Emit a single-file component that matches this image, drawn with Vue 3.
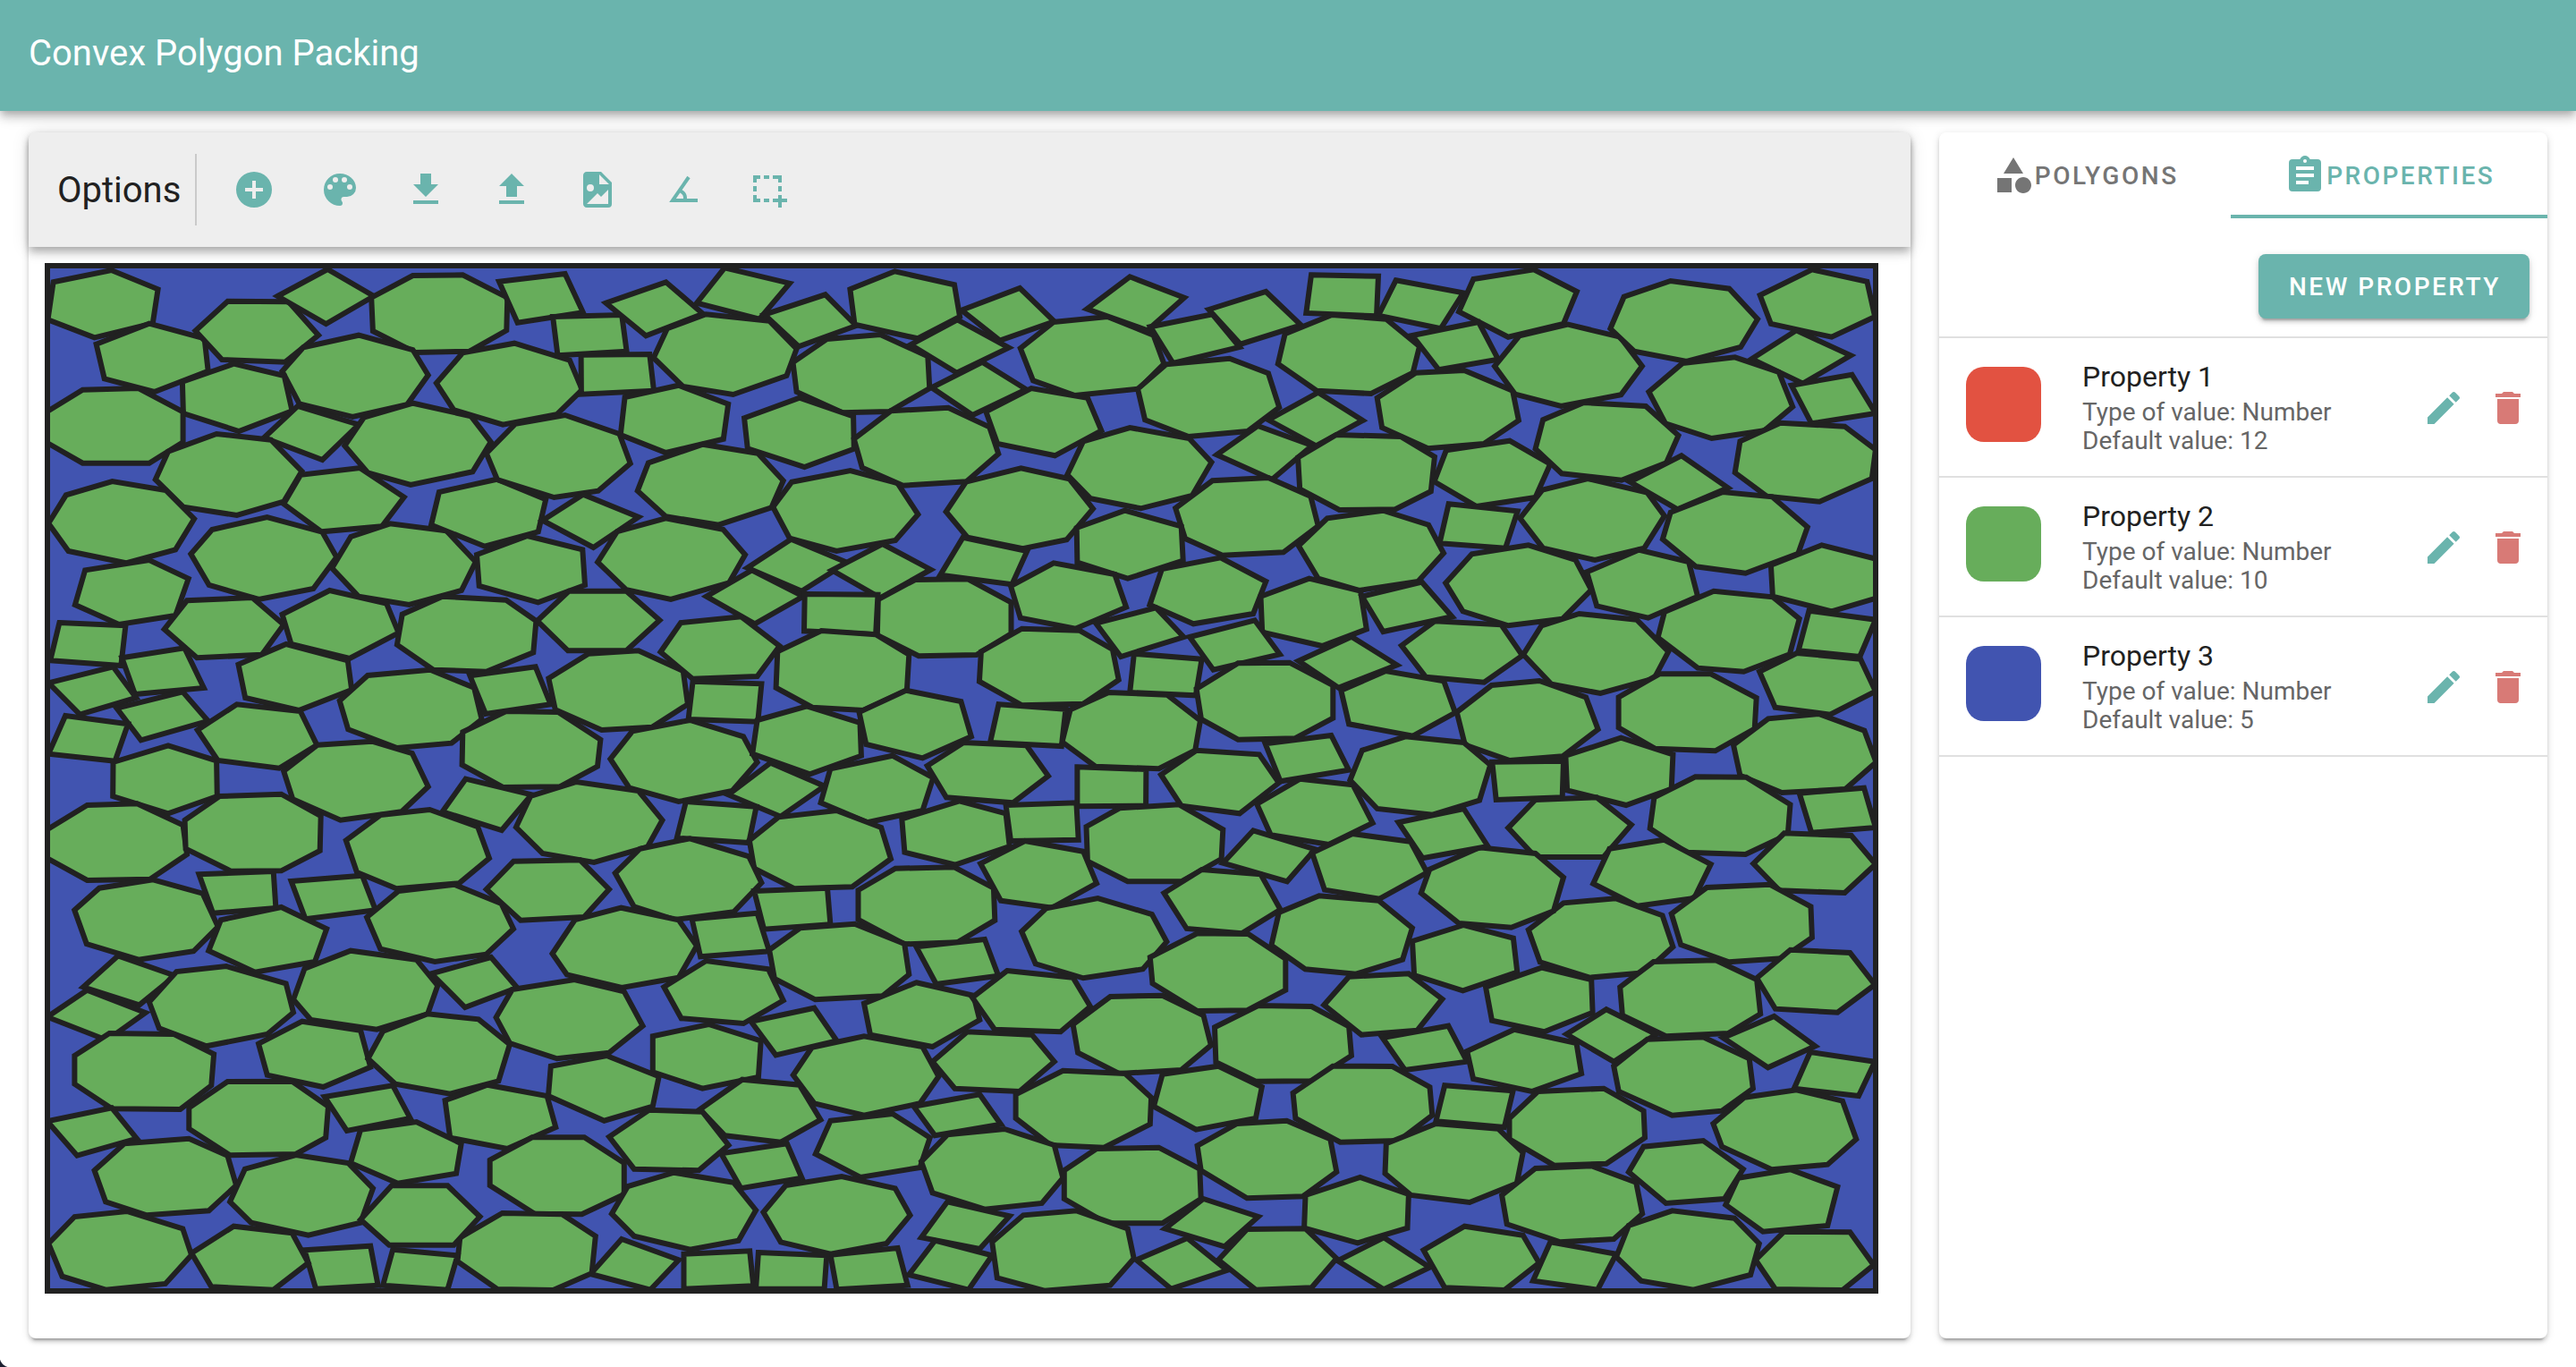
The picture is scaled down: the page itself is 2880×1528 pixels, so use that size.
<script setup>
import { ref } from 'vue'

const icons = {
  add: 'M17,13H13V17H11V13H7V11H11V7H13V11H17M12,2A10,10 0 0,0 2,12A10,10 0 0,0 12,22A10,10 0 0,0 22,12A10,10 0 0,0 12,2Z',
  palette: 'M17.5,12A1.5,1.5 0 0,1 16,10.5A1.5,1.5 0 0,1 17.5,9A1.5,1.5 0 0,1 19,10.5A1.5,1.5 0 0,1 17.5,12M14.5,8A1.5,1.5 0 0,1 13,6.5A1.5,1.5 0 0,1 14.5,5A1.5,1.5 0 0,1 16,6.5A1.5,1.5 0 0,1 14.5,8M9.5,8A1.5,1.5 0 0,1 8,6.5A1.5,1.5 0 0,1 9.5,5A1.5,1.5 0 0,1 11,6.5A1.5,1.5 0 0,1 9.5,8M6.5,12A1.5,1.5 0 0,1 5,10.5A1.5,1.5 0 0,1 6.5,9A1.5,1.5 0 0,1 8,10.5A1.5,1.5 0 0,1 6.5,12M12,3A9,9 0 0,0 3,12A9,9 0 0,0 12,21A1.5,1.5 0 0,0 13.5,19.5C13.5,19.11 13.35,18.76 13.11,18.5C12.88,18.23 12.73,17.88 12.73,17.5A1.5,1.5 0 0,1 14.23,16H16A5,5 0 0,0 21,11C21,6.58 16.97,3 12,3Z',
  download: 'M5,20H19V18H5M19,9H15V3H9V9H5L12,16L19,9Z',
  upload: 'M9,16V10H5L12,3L19,10H15V16H9M5,20V18H19V20H5Z',
  image: 'M13,9H18.5L13,3.5V9M6,2H14L20,8V20A2,2 0 0,1 18,22H6C4.89,22 4,21.1 4,20V4C4,2.89 4.89,2 6,2M6,20H15L18,20V12L14,16L12,14L6,20M8,9A2,2 0 0,0 6,11A2,2 0 0,0 8,13A2,2 0 0,0 10,11A2,2 0 0,0 8,9Z',
  angle: 'M20,19H4.09L14.18,4.43L15.82,5.57L11.28,12.13C12.89,12.96 14,14.62 14,16.54C14,16.7 14,16.85 13.97,17H20V19M7.91,17H11.96C12,16.85 12,16.7 12,16.54C12,15.28 11.24,14.22 10.14,13.78L7.91,17Z',
  select: 'M3,4H7V6H5V8H3V4M9,4H12V6H9V4M14,4H19V8H17V6H14V4M3,10H5V13H3V10M17,10H19V13H17V10M3,15H5V17H7V19H3V15M9,17H12V19H9V17M17,15H19V17H22V19H19V22H17V19H14V17H17V15Z',
  shape: 'M11,13.5V21.5H3V13.5H11M12,2L17.5,11H6.5L12,2M17.5,13C20,13 22,15 22,17.5C22,20 20,22 17.5,22C15,22 13,20 13,17.5C13,15 15,13 17.5,13Z',
  clipboard: 'M17,9H7V7H17M17,13H7V11H17M14,17H7V15H14M12,3A1,1 0 0,1 13,4A1,1 0 0,1 12,5A1,1 0 0,1 11,4A1,1 0 0,1 12,3M19,3H14.82C14.4,1.84 13.3,1 12,1C10.7,1 9.6,1.84 9.18,3H5A2,2 0 0,0 3,5V19A2,2 0 0,0 5,21H19A2,2 0 0,0 21,19V5A2,2 0 0,0 19,3Z',
  pencil: 'M20.71,7.04C21.1,6.65 21.1,6 20.71,5.63L18.37,3.29C18,2.9 17.35,2.9 16.96,3.29L15.12,5.12L18.87,8.87M3,17.25V21H6.75L17.81,9.93L14.06,6.18L3,17.25Z',
  trash: 'M19,4H15.5L14.5,3H9.5L8.5,4H5V6H19M6,19A2,2 0 0,0 8,21H16A2,2 0 0,0 18,19V7H6V19Z',
}

const tools = [
  { icon: 'add', label: 'Add' },
  { icon: 'palette', label: 'Colors' },
  { icon: 'download', label: 'Download' },
  { icon: 'upload', label: 'Upload' },
  { icon: 'image', label: 'Export image' },
  { icon: 'angle', label: 'Angle' },
  { icon: 'select', label: 'Select area' },
]

const tabs = [
  { id: 'polygons', icon: 'shape', label: 'Polygons' },
  { id: 'properties', icon: 'clipboard', label: 'Properties' },
]
const activeTab = ref('properties')

const properties = [
  { name: 'Property 1', color: '#e25241', type: 'Number', value: 12 },
  { name: 'Property 2', color: '#67ad5b', type: 'Number', value: 10 },
  { name: 'Property 3', color: '#4154b0', type: 'Number', value: 5 },
]

// Packed polygons, stored per region of the container: one polygon per line,
// vertices in region units.
const regions = [
  { x: -10, y: -14, sx: 0.338, sy: 1 / 3, shapes: `
58,106 250,66 404,130 387,244 194,292 40,232
200,314 375,245 558,295 570,404 392,474 227,430
528,269 635,170 836,172 935,284 825,374 616,366
800,153 965,63 1118,153 960,246
1110,158 1247,84 1412,82 1560,158 1557,268 1435,338 1255,342 1115,270
815,405 885,325 1068,284 1247,333 1298,418 1228,517 1048,558 872,514
1325,445 1412,343 1583,311 1766,368 1807,467 1723,550 1545,584 1382,534
485,440 655,380 822,420 848,538 672,606 488,546
38,540 155,467 340,462 487,541 487,643 375,713 155,713 38,645
755,628 866,522 1068,584 948,702
1022,655 1085,560 1248,512 1440,556 1505,642 1445,742 1240,786 1098,745
396,768 438,674 598,615 778,635 880,740 820,842 665,888 488,860
820,850 876,752 1072,729 1218,827 1145,925 945,943
42,915 100,820 253,774 430,804 524,900 462,1003 298,1048 108,1008
513,1018 583,936 765,894 948,944 995,1028 918,1134 738,1170 573,1122
980,1065 1042,960 1172,916 1358,940 1455,1044 1408,1140 1235,1188 1068,1160
1308,920 1334,810 1525,767 1687,835 1662,943 1485,992
130,1188 163,1072 375,1038 505,1100 462,1224 275,1254` },
  { x: 510, y: -14, sx: 0.338, sy: 1 / 3, shapes: `
-48,680 48,581 212,552 392,615 428,714 322,806 176,828 -12,768
-80,1020 88,957 270,1003 278,1122 123,1180 -72,1125
-6,104 212,78 272,208 55,242
172,222 400,216 416,338 188,352
265,350 492,348 506,470 266,482
348,176 546,106 668,212 480,286
740,58 955,110 855,230 648,176
505,360 550,262 678,214 888,236 978,330 945,420 768,483 602,456
872,215 1073,148 1175,252 985,322
1155,130 1303,70 1500,115 1518,222 1378,295 1170,248
966,375 1078,297 1255,282 1412,355 1418,462 1285,540 1130,544 978,474
410,492 588,452 752,515 736,632 546,678 396,618
805,562 988,494 1166,556 1168,665 1004,726 816,664
452,806 488,712 668,650 850,680 934,772 895,862 720,920 545,892
900,860 962,776 1156,738 1312,780 1380,885 1305,972 1110,1008 955,965
1168,632 1290,538 1480,527 1616,592 1646,682 1540,775 1330,788 1195,728
138,905 272,818 455,894 306,996
320,1045 385,942 545,898 735,935 808,1020 755,1114 562,1170 415,1138
815,1064 960,968 1145,1046 995,1142
1095,1072 1262,984 1422,1070 1255,1165
680,1160 830,1072 1000,1160 840,1252
1355,316 1510,232 1680,326 1508,410
1425,460 1592,374 1738,466 1560,552
1248,1170 1370,1104 1545,1102 1688,1180 1688,1285 1573,1356 1382,1360 1245,1290` },
  { x: 1030, y: -14, sx: 0.338, sy: 1 / 3, shapes: `
-15,200 178,126 292,238 112,302
180,328 290,240 468,222 620,284 655,380 572,464 360,486 222,436
400,196 542,88 722,158 600,268
610,256 815,214 905,324 685,378
803,198 992,138 1108,250 908,314
1142,82 1364,86 1358,220 1125,210
1422,100 1645,142 1570,262 1364,218
1032,380 1055,280 1210,216 1390,230 1500,322 1478,410 1340,480 1160,470
66,540 216,462 402,494 448,604 294,688 104,648
568,464 662,382 872,362 1000,412 1036,526 932,606 736,624 592,568
335,752 388,640 542,594 738,630 812,710 748,822 578,865 412,832
1000,568 1165,476 1312,570 1158,655
830,685 965,588 1145,654 1012,768
1360,494 1488,410 1648,402 1808,470 1828,570 1713,648 1528,664 1376,594
1098,694 1225,618 1438,624 1550,692 1538,808 1420,868 1235,870 1104,800
-66,876 0,776 182,730 342,766 420,866 333,970 188,1000 5,962
-10,962 202,1008 152,1120 -85,1088
693,864 815,772 1000,762 1140,824 1165,924 1050,1012 848,1022 725,966
366,930 525,872 712,925 718,1040 535,1100 368,1046
1100,990 1195,898 1380,872 1530,920 1580,1015 1495,1110 1300,1140 1165,1100
148,1125 290,1048 492,1086 530,1196 362,1268 180,1232
608,1188 648,1068 842,1030 992,1110 950,1218 752,1252
975,1160 1135,1100 1305,1142 1325,1270 1178,1326 980,1280` },
  { x: 1550, y: -14, sx: 0.338, sy: 1 / 3, shapes: `
92,205 140,96 340,64 482,138 438,246 255,290
-62,285 157,240 222,365 25,400
210,388 292,286 452,248 625,290 698,388 628,484 430,522 278,482
593,262 638,155 792,102 986,128 1080,230 1024,324 845,372 672,338
1088,150 1260,64 1442,104 1468,222 1325,290 1124,246
1060,364 1208,268 1388,352 1230,446
1192,452 1392,416 1470,546 1258,580
720,474 832,378 1005,358 1150,408 1196,524 1102,604 928,630 775,580
345,665 370,568 505,510 710,522 818,620 778,712 630,770 432,748
1005,745 1022,640 1155,578 1368,590 1470,668 1458,765 1285,842 1110,824
10,775 50,670 260,638 394,716 345,828 150,858
658,776 828,688 982,796 815,868
58,850 286,874 246,998 28,982
294,898 368,803 518,765 715,812 772,890 705,998 542,1038 370,998
766,968 792,878 965,810 1128,826 1245,928 1214,1016 1040,1082 876,1060
48,1115 135,1018 322,988 478,1038 530,1138 435,1235 255,1258 105,1210
515,1078 686,1004 852,1044 882,1160 718,1232 548,1192
1124,1055 1292,988 1475,1035 1475,1165 1325,1210 1130,1160` },
  { x: -10, y: 376, sx: 0.338, sy: 1 / 3, shapes: `
425,100 500,4 716,-6 820,85 748,185 533,196
815,50 972,-30 1160,14 1200,112 1038,198 845,150
1195,152 1212,50 1345,-10 1556,2 1655,72 1646,178 1490,242 1315,236
78,78 297,88 282,222 48,205
285,196 492,163 556,297 328,318
42,280 256,226 332,330 146,386
268,365 486,310 570,408 348,472
98,390 305,418 262,542 42,518
256,546 438,490 598,541 600,660 438,718 255,660
670,218 828,150 1032,205 1045,303 870,372 693,330
535,438 665,352 875,375 930,488 805,566 602,540
1005,340 1098,255 1305,236 1450,296 1475,402 1375,482 1195,498 1033,436
820,576 932,488 1112,476 1245,516 1298,628 1210,712 1008,740 850,670
38,772 170,690 335,685 487,757 500,855 378,938 170,942 38,868
493,740 608,660 812,653 943,726 940,843 812,910 645,911 496,836
1026,808 1140,723 1303,705 1462,763 1500,868 1400,952 1193,970 1062,915
1436,256 1653,226 1703,352 1488,384
1412,445 1556,375 1728,378 1868,470 1858,560 1733,628 1545,630 1410,555
1422,602 1640,655 1541,774 1345,712
540,922 786,912 794,1035 586,1052
845,945 1080,926 1124,1042 892,1072
128,1042 210,968 388,940 552,986 603,1098 522,1180 340,1208 168,1155
572,1178 612,1075 812,1032 962,1105 923,1215 725,1250
1095,1066 1200,978 1385,956 1540,1020 1580,1105 1490,1190 1320,1215 1140,1172` },
  { x: 510, y: 376, sx: 0.338, sy: 1 / 3, shapes: `
1005,-18 1247,-16 1240,118 1003,106
120,72 225,-28 415,-28 525,70 415,172 222,172
915,175 1060,105 1240,118 1350,185 1343,305 1200,372 1030,362 910,296
1185,378 1340,305 1522,342 1556,460 1395,532 1208,486
158,265 290,182 455,172 603,240 618,352 500,428 333,438 180,370
528,176 595,78 795,58 922,156 848,258 634,266
635,275 862,283 850,410 620,402
362,535 435,442 625,405 802,460 848,546 765,642 588,678 425,632
848,405 1012,358 1188,414 1192,524 1022,586 832,518
752,655 892,548 1070,626 925,728
50,764 98,660 250,612 455,642 534,740 485,830 308,882 138,852
612,678 845,695 820,816 582,800
1058,682 1090,568 1295,524 1430,598 1395,708 1212,748
822,808 918,730 1110,708 1258,765 1290,870 1162,964 970,970 838,902
-48,972 42,878 262,874 358,972 275,1065 65,1076
378,918 460,836 625,802 820,862 862,950 770,1048 575,1074 440,1030
838,978 1080,968 1090,1090 870,1106
632,1072 848,1052 888,1180 660,1198
170,1188 245,1074 398,1034 588,1075 648,1162 588,1268 400,1302 218,1258
1182,975 1305,902 1500,898 1630,968 1634,1076 1510,1150 1335,1156 1182,1074
888,1175 990,1102 1170,1088 1335,1155 1350,1258 1262,1330 1040,1342 905,1272` },
  { x: 1030, y: 376, sx: 0.338, sy: 1 / 3, shapes: `
1310,-10 1508,-58 1608,58 1380,108
50,175 185,98 375,104 485,168 505,270 388,350 185,355 44,275
430,80 628,28 720,126 512,192
740,126 955,70 1038,184 818,236
556,182 780,200 760,322 542,312
1100,206 1275,125 1425,220 1232,296
762,300 900,214 1070,212 1214,288 1214,398 1088,466 900,470 778,402
318,478 345,370 472,312 665,320 775,406 758,506 638,568 428,560
108,352 330,368 316,492 80,480
-128,558 -8,480 200,490 272,592 155,682 -65,664
368,562 596,570 595,692 368,694
132,690 365,682 372,806 148,810
645,588 762,506 970,520 1035,615 905,718 712,692
990,484 1208,456 1266,572 1040,610
962,686 1105,602 1280,622 1345,750 1200,822 1008,790
398,762 508,700 705,688 850,772 845,870 712,946 535,946 402,878
-212,736 -22,676 132,718 144,828 -35,890 -203,848
850,884 950,775 1155,838 1062,946
1145,850 1278,786 1470,812 1525,916 1368,1004 1186,974
48,886 195,810 388,845 432,952 285,1034 115,1010
655,985 780,906 975,922 1040,1040 912,1120 730,1104
184,1114 265,1036 436,1002 615,1056 664,1148 585,1240 388,1270 230,1222
1010,1160 1035,1050 1168,994 1365,1010 1476,1102 1444,1208 1290,1256 1122,1240` },
  { x: 1550, y: 376, sx: 0.338, sy: 1 / 3, shapes: `
750,128 772,42 935,-28 1130,-8 1218,65 1186,184 1034,242 882,230
1250,38 1470,68 1418,192 1215,172
1086,242 1210,180 1420,200 1470,308 1320,386 1138,362
305,185 365,88 490,48 680,68 785,175 738,265 560,315 398,284
-98,155 12,73 232,85 302,188 175,278 -18,260
85,378 200,288 358,273 512,328 552,436 435,526 260,540 112,488
620,328 755,250 925,250 1076,330 1070,434 940,508 740,500 620,430
1000,488 1115,400 1282,384 1433,440 1472,546 1370,636 1160,648 1022,590
445,524 628,464 800,520 795,635 645,690 450,640
202,545 438,542 434,664 215,672
1218,650 1432,632 1470,765 1258,782
724,768 738,664 874,595 1042,596 1188,688 1180,788 1040,855 845,848
255,766 345,672 548,664 662,756 570,864 345,864
1066,886 1168,784 1390,792 1470,888 1368,984 1152,976
536,953 590,836 770,806 925,888 870,1002 682,1028
795,1054 912,966 1120,956 1256,1030 1260,1134 1160,1204 985,1216 826,1158
322,1108 438,1018 610,1003 765,1060 800,1165 706,1252 524,1268 360,1216
-33,985 -5,905 160,832 345,852 438,932 405,1045 265,1100 92,1086
-62,1146 108,1092 272,1136 285,1250 105,1312 -56,1260
-108,748 108,702 188,828 -28,868
-268,606 -228,506 -85,460 108,480 196,555 160,674 5,722 -178,702
-298,305 -150,240 42,274 80,380 -60,458 -272,418` },
  { x: -50, y: 766, sx: 1.39, sy: 1 / 3, shapes: `
95,25 141,92 112,190 67,130
70,140 117,216 86,308 38,230
120,180 142,78 182,60 230,118 236,215 215,288 166,328 128,268
236,172 245,68 282,8 335,38 352,125 344,220 303,272 250,240
395,30 416,132 374,198 347,85
399,232 412,138 462,105 502,145 517,260 490,350 448,370 410,318
568,42 618,70 630,175 598,252 548,235 534,130
737,115 783,158 788,240 750,330 700,290 695,185
810,75 863,98 877,195 853,280 800,272 782,165
655,200 673,310 624,358 604,245
570,255 612,310 610,432 565,470 525,415 525,295
208,320 243,245 290,275 298,398 260,465 215,425
60,360 88,285 140,288 172,355 170,460 145,540 90,538 60,455
296,370 308,278 344,220 385,238 410,322 401,445 362,488 318,455
443,395 488,360 530,430 525,530 486,578 441,495
638,425 653,332 695,295 742,330 755,430 740,520 695,560 655,520
750,380 778,280 830,290 848,380 820,480 768,470
863,255 893,162 935,158 968,225 974,325 950,408 900,420 867,350
977,265 1012,192 1055,195 1085,262 1087,360 1055,445 1010,446 978,382
1065,190 1085,95 1133,85 1160,170 1140,275 1095,290
1195,130 1240,65 1280,105 1281,215 1242,280 1200,242
1303,130 1330,45 1380,40 1413,105 1416,220 1390,285 1340,295 1305,225
1413,100 1440,5 1488,15 1508,122 1478,215 1428,203
1292,205 1332,288 1298,380 1260,288
1165,260 1180,380 1130,408 1112,300
1180,345 1218,272 1268,318 1272,420 1232,480 1185,438
1298,395 1325,305 1370,298 1407,370 1410,470 1385,545 1345,560 1302,480
1427,228 1460,328 1422,400 1386,300
1456,348 1508,380 1495,495 1443,470
1378,588 1403,500 1445,475 1482,512 1493,640 1470,725 1425,742 1385,665
928,530 935,422 980,395 1015,465 1010,570 962,608
1040,485 1072,395 1120,396 1150,465 1152,560 1125,645 1078,650 1042,570
1162,460 1217,478 1210,600 1155,580
1214,570 1237,480 1290,470 1322,545 1323,635 1292,722 1250,728 1214,640
817,490 855,410 905,420 926,500 925,590 888,668 845,660 817,570
788,490 805,590 752,628 735,530
563,540 597,440 643,458 660,575 628,650 583,628
90,535 110,638 62,695 38,580
152,535 183,447 235,446 264,530 262,635 238,690 185,694 152,605
316,460 330,570 279,612 261,498
358,510 392,458 440,495 447,600 408,672 362,635
490,632 522,542 565,548 586,660 562,745 510,740
668,578 718,555 748,635 740,735 692,768 656,690
741,715 762,625 808,606 848,660 855,770 838,855 792,875 750,820
963,662 995,588 1035,578 1070,640 1075,750 1048,832 1003,838 966,745
1115,655 1155,588 1205,605 1225,685 1220,788 1182,852 1135,828 1114,755
1310,750 1322,665 1370,645 1402,740 1387,840 1340,855
856,745 882,672 932,668 965,740 966,840 935,922 890,922 856,840
633,655 645,770 596,805 580,688
282,720 290,608 335,582 371,655 367,755 320,788
76,745 100,655 152,638 183,695 190,795 168,880 118,895 85,850
185,850 197,740 238,693 280,720 300,805 290,920 248,962 202,920
394,710 428,634 470,634 502,720 502,825 468,892 430,890 394,795
492,890 505,798 542,752 590,785 608,878 594,980 555,1010 510,965
614,885 632,795 677,765 720,805 732,895 713,990 668,1025 628,985
762,850 812,898 788,1008 741,970
968,840 1012,900 985,1000 937,940
798,985 823,895 866,880 907,940 912,1040 893,1130 840,1148 802,1105
1050,828 1094,768 1133,825 1132,938 1092,988 1049,938
1208,828 1235,738 1280,730 1316,785 1321,890 1298,975 1255,985 1212,925
1398,770 1440,742 1478,800 1470,930 1418,950 1388,860
1300,1035 1310,930 1345,880 1395,905 1415,990 1408,1095 1362,1145 1320,1115
1412,1045 1435,950 1488,952 1507,1062 1482,1146 1428,1143
1247,985 1300,1025 1285,1145 1233,1115
1145,1012 1178,932 1225,962 1238,1055 1210,1146 1162,1138
1113,970 1150,1070 1113,1144 1076,1048
980,1045 1003,942 1050,940 1075,1040 1055,1138 1010,1145
955,972 987,1080 942,1142 914,1045
752,980 798,1030 779,1145 731,1095
668,1028 722,1005 730,1130 673,1144
610,1020 665,1030 663,1142 608,1142
550,1025 603,1015 606,1132 550,1142
500,975 546,1045 523,1145 475,1092
370,970 404,888 452,892 479,965 476,1090 445,1146 400,1143 368,1050
290,910 315,796 360,796 386,900 365,995 313,995
316,1010 368,1030 360,1145 308,1130
245,1012 298,998 304,1130 254,1142
154,1022 188,932 235,955 248,1055 220,1145 170,1135
39,990 60,900 102,882 147,940 154,1028 133,1125 85,1145 50,1100
737,-5 792,-30 803,92 753,120
925,30 963,-50 1004,-48 1034,35 1034,140 1003,208 963,210 927,118` },
]

const polygons = regions.flatMap(({ x, y, sx, sy, shapes }) =>
  shapes.trim().split('\n').map((line) =>
    line.split(' ').map((vertex) => {
      const [u, v] = vertex.split(',').map(Number)
      return `${(x + u * sx).toFixed(1)},${(y + v * sy).toFixed(1)}`
    }).join(' ')
  )
)
</script>

<template>
  <div class="page">
    <header class="app-bar">
      <h1 class="app-title">Convex Polygon Packing</h1>
    </header>

    <main class="content">
      <section class="card workspace">
        <div class="toolbar">
          <h2 class="toolbar-title">Options</h2>
          <span class="toolbar-divider"></span>
          <button v-for="tool in tools" :key="tool.icon" class="icon-button tool" type="button" :aria-label="tool.label">
            <svg class="icon" viewBox="0 0 24 24" aria-hidden="true"><path :d="icons[tool.icon]" /></svg>
          </button>
        </div>
        <svg class="packing" viewBox="0 0 2050 1152" role="img" aria-label="Packed polygons">
          <defs>
            <clipPath id="container-clip"><rect width="2050" height="1152" /></clipPath>
          </defs>
          <rect class="packing-fill" width="2050" height="1152" />
          <g class="packing-items" clip-path="url(#container-clip)">
            <polygon v-for="(points, i) in polygons" :key="i" :points="points" />
          </g>
          <rect class="packing-border" x="3" y="3" width="2044" height="1146" />
        </svg>
      </section>

      <aside class="card sidebar">
        <div class="tabs" role="tablist">
          <button
            v-for="tab in tabs"
            :key="tab.id"
            class="tab"
            :class="{ active: tab.id === activeTab }"
            type="button"
            role="tab"
            :aria-selected="tab.id === activeTab"
            @click="activeTab = tab.id"
          >
            <svg class="icon" viewBox="0 0 24 24" aria-hidden="true"><path :d="icons[tab.icon]" /></svg>
            <span>{{ tab.label }}</span>
          </button>
        </div>

        <div class="actions">
          <button class="primary-button" type="button">New property</button>
        </div>

        <ul class="properties">
          <li v-for="property in properties" :key="property.name" class="property">
            <span class="swatch" :style="{ backgroundColor: property.color }"></span>
            <div class="property-text">
              <h3 class="property-name">{{ property.name }}</h3>
              <p class="property-detail">Type of value: {{ property.type }}</p>
              <p class="property-detail">Default value: {{ property.value }}</p>
            </div>
            <button class="icon-button row-action" type="button" :aria-label="`Edit ${property.name}`">
              <svg class="icon" viewBox="0 0 24 24" aria-hidden="true"><path :d="icons.pencil" /></svg>
            </button>
            <button class="icon-button row-action danger" type="button" :aria-label="`Delete ${property.name}`">
              <svg class="icon" viewBox="0 0 24 24" aria-hidden="true"><path :d="icons.trash" /></svg>
            </button>
          </li>
        </ul>
      </aside>
    </main>
  </div>
</template>

<style>
body {
  margin: 0;
  background: #fff;
}
</style>

<style scoped>
.page {
  --teal: #6ab4ad;
  --ink: #212121;
  box-sizing: border-box;
  min-height: 100vh;
  display: flex;
  flex-direction: column;
  /* rounded window corner */
  background: radial-gradient(circle at 100% 0, transparent 12px, #1c2030 13px) left bottom / 12px 12px no-repeat;
  font-family: Roboto, "Liberation Sans", sans-serif;
  color: var(--ink);
}

.app-bar {
  display: flex;
  align-items: center;
  height: 120px;
  padding: 0 32px 4px;
  background: var(--teal);
  color: #fff;
  box-shadow: 0 4px 8px -2px rgba(0, 0, 0, 0.2), 0 8px 10px rgba(0, 0, 0, 0.14), 0 2px 20px rgba(0, 0, 0, 0.12);
}

.app-title,
.toolbar-title {
  margin: 0;
  font-size: 40px;
  font-weight: 400;
  line-height: 60px;
}

.toolbar-title {
  padding-top: 2px;
}

.content {
  flex: 1;
  display: grid;
  grid-template-columns: minmax(0, 1fr) 680px;
  gap: 32px;
  padding: 24px 32px 32px;
}

.card {
  border-radius: 8px;
  background: #fff;
  box-shadow: 0 6px 2px -4px rgba(0, 0, 0, 0.2), 0 4px 4px rgba(0, 0, 0, 0.14), 0 2px 10px rgba(0, 0, 0, 0.12);
}

.toolbar {
  display: flex;
  align-items: center;
  height: 128px;
  padding: 0 64px 0 32px;
  border-radius: 8px 8px 0 0;
  background: #eee;
  box-shadow: 0 4px 8px -2px rgba(0, 0, 0, 0.2), 0 8px 10px rgba(0, 0, 0, 0.14), 0 2px 20px rgba(0, 0, 0, 0.12);
}

.toolbar-divider {
  width: 2px;
  height: 80px;
  margin: 0 16px;
  background: #cacaca;
}

.icon {
  display: block;
  flex: none;
  width: 48px;
  height: 48px;
  fill: currentColor;
}

.icon-button {
  padding: 0;
  border: 0;
  background: none;
  color: var(--teal);
}

.icon-button.danger {
  color: #d87a76;
}

.tool {
  padding: 24px;
}

.packing {
  display: block;
  box-sizing: border-box;
  width: 100%;
  padding: 18px 36px 50px 18px;
}

.packing-fill {
  fill: #4154b0;
}

.packing-items {
  fill: #67ad5b;
  stroke: #212121;
  stroke-width: 6px;
}

.packing-border {
  fill: none;
  stroke: #212121;
  stroke-width: 6px;
}

.tabs {
  display: flex;
}

.tab {
  flex: 1 1 auto;
  display: flex;
  align-items: center;
  justify-content: center;
  height: 96px;
  padding: 0;
  border: 0;
  background: none;
  color: #757575;
}

.tab.active {
  color: var(--teal);
  box-shadow: inset 0 -4px 0 var(--teal);
}

.tab,
.primary-button {
  font-family: inherit;
  font-size: 28px;
  font-weight: 500;
  letter-spacing: 0.09em;
  text-transform: uppercase;
}

.actions {
  display: flex;
  justify-content: flex-end;
  padding: 40px 20px 20px;
}

.primary-button {
  height: 72px;
  padding: 0 32px 0 34px;
  border: 0;
  border-radius: 8px;
  background: var(--teal);
  color: #fff;
  box-shadow: 0 6px 2px -4px rgba(0, 0, 0, 0.2), 0 4px 4px rgba(0, 0, 0, 0.14), 0 2px 10px rgba(0, 0, 0, 0.12);
}

.properties {
  margin: 0;
  padding: 0;
  list-style: none;
  border-top: 2px solid #e0e0e0;
}

.property {
  display: flex;
  align-items: center;
  gap: 24px;
  height: 154px;
  padding: 0 20px 0 30px;
  border-bottom: 2px solid #e0e0e0;
}

.swatch {
  flex: none;
  width: 84px;
  height: 84px;
  margin-bottom: 6px;
  border-radius: 20px;
}

.property-text {
  flex: 1;
  padding-left: 22px;
}

.property-name {
  margin: 0 0 4px;
  font-size: 32px;
  font-weight: 400;
  line-height: 40px;
}

.property-detail {
  margin: 0;
  font-size: 28px;
  line-height: 32px;
  color: #666;
}

.row-action {
  margin-top: 2px;
}
</style>
